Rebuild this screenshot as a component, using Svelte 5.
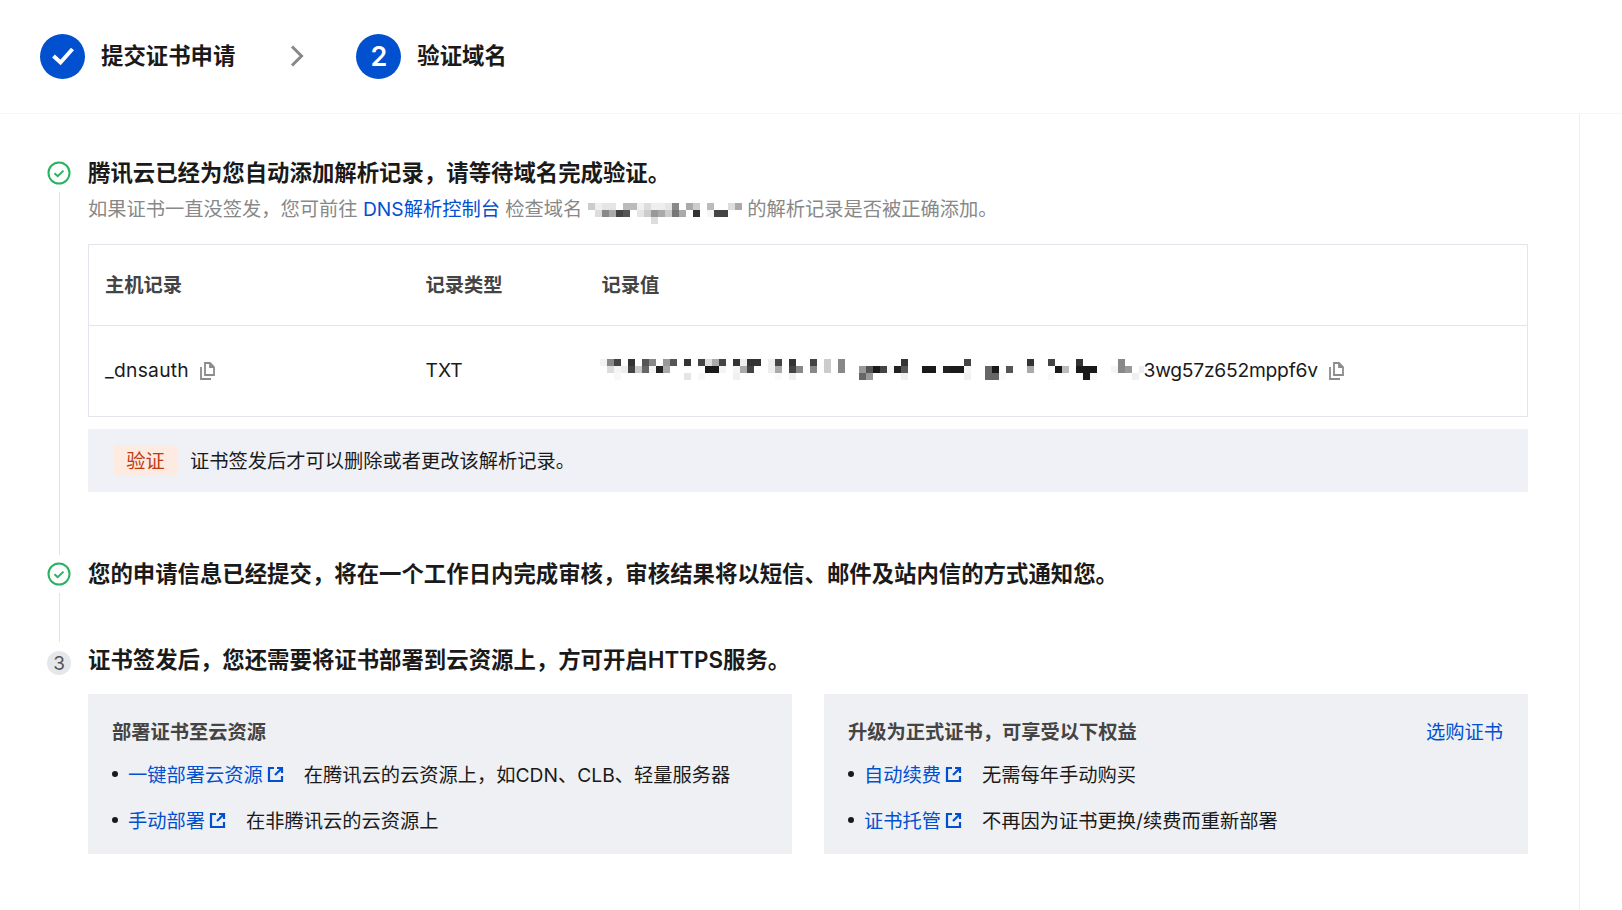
<script>
    // 打码区域: 每行 "列:灰度"
    const valueRows = [
        '0:f2 1:888 2:444 4:333 6:555 7:888 9:999 10:555 12:333 14:444 15:ddd 16:aaa 17:444 19:333 20:eee 21:333 22:333 24:eee 25:444 27:333 30:444 32:ccc 34:888 43:333 52:444 61:333 64:444 68:333 74:888',
        '1:ddd 2:f5 3:eee 4:444 5:ccc 6:666 7:f5 8:222 9:aaa 15:1a 16:1a 17:f5 19:f5 20:aaa 21:444 24:eee 25:aaa 27:444 28:888 30:888 32:ccc 34:888 37:999 38:555 39:1a 40:444 41:f8 42:222 43:555 46:1a 47:1a 49:222 50:1a 51:1a 52:f5 55:666 56:1a 58:555 61:aaa 65:1a 66:bbb 68:1a 69:1a 70:1a 73:f5 74:888 75:999 77:eee',
        '2:f8 12:e5 14:f8 19:f0 25:fa 27:f0 37:666 38:999 43:f0 52:f0 55:666 56:666 57:fa 64:f8 69:1a 70:f8 76:f0'
    ];
    const domainRows = [
        '0:ccc 1:eee 2:e5 3:e5 5:bbb 6:bbb 7:f0 8:ddd 9:eee 10:eee 11:e5 12:888 14:aaa 15:ccc 17:bbb 20:ddd 21:aaa',
        '1:ddd 2:888 3:aaa 4:444 5:555 7:e5 8:ccc 9:999 10:aaa 11:ccc 12:777 13:aaa 15:333 17:f5 18:444 19:444',
        '9:ddd'
    ];

    function cells(rows) {
        return rows.flatMap((row, r) => row.split(' ').map(item => {
            const [c, g] = item.split(':');
            const fill = g.length === 2 ? `#${g}${g}${g}` : `#${g}`;
            return { x: c * 7, y: r * 7, fill };
        }));
    }

    const valueCells = cells(valueRows);
    const domainCells = cells(domainRows);
</script>

{#snippet copyIcon()}
    <svg class="copy" width="16" height="19" viewBox="0 0 16 19" fill="none" stroke="#8c8c8c" stroke-width="1.8">
        <path d="M6 2h5l4 4v8H6z" />
        <path d="M11 2v4h4" fill="#8c8c8c" />
        <path d="M2 6v12h10" />
    </svg>
{/snippet}

{#snippet extIcon()}
    <svg class="ext" width="17" height="17" viewBox="0 0 17 17" fill="none" stroke="#0050d0" stroke-width="2.2">
        <path d="M7 2H2v13h13v-5" />
        <path d="M10 2h5v5M15 2L8 9" />
    </svg>
{/snippet}

{#snippet okIcon()}
    <svg class="step-icon" width="24" height="24" viewBox="0 0 24 24" fill="none" stroke="#27b35f" stroke-width="2">
        <circle cx="12" cy="12" r="10.5" />
        <path d="M7.5 12.2l3.2 3 5.8-5.6" />
    </svg>
{/snippet}

<div class="page">
    <header class="steps">
        <div class="circle">
            <svg width="24" height="20" viewBox="0 0 24 20" fill="none" stroke="#fff" stroke-width="4">
                <path d="M2.5 9l7 6.5L21.5 2" />
            </svg>
        </div>
        <span class="step-name first">提交证书申请</span>
        <svg class="chevron" width="14" height="23" viewBox="0 0 14 23" fill="none" stroke="#888" stroke-width="3">
            <path d="M2 1.5l9.5 9.5L2 20.5" />
        </svg>
        <div class="circle">2</div>
        <span class="step-name">验证域名</span>
    </header>

    <main class="main">
        <section class="step step-a">
            <div class="rail">
                {@render okIcon()}
                <div class="line"></div>
            </div>
            <div class="body">
                <h2>腾讯云已经为您自动添加解析记录，请等待域名完成验证。</h2>
                <p class="sub">如果证书一直没签发，您可前往 <a href="#dns">DNS解析控制台</a> 检查域名 <svg class="mosaic domain" width="154" height="21">
                        {#each domainCells as c}<rect x={c.x} y={c.y} width="7" height="7" fill={c.fill} />{/each}
                    </svg> 的解析记录是否被正确添加。</p>
                <table>
                    <colgroup><col class="c1" /><col class="c2" /><col /></colgroup>
                    <thead>
                        <tr><th>主机记录</th><th>记录类型</th><th>记录值</th></tr>
                    </thead>
                    <tbody>
                        <tr>
                            <td class="up"><span class="cell"><span class="host">_dnsauth</span>{@render copyIcon()}</span></td>
                            <td class="up">TXT</td>
                            <td>
                                <span class="cell value">
                                    <svg class="mosaic" width="544" height="21">
                                        {#each valueCells as c}<rect x={c.x} y={c.y} width="7" height="7" fill={c.fill} />{/each}
                                    </svg>
                                    <span class="token">3wg57z652mppf6v</span>
                                    {@render copyIcon()}
                                </span>
                            </td>
                        </tr>
                    </tbody>
                </table>
                <div class="notice">
                    <span class="tag"><span>验证</span></span>
                    <span class="notice-text">证书签发后才可以删除或者更改该解析记录。</span>
                </div>
            </div>
        </section>

        <section class="step step-b">
            <div class="rail">
                {@render okIcon()}
                <div class="line"></div>
            </div>
            <div class="body">
                <h2>您的申请信息已经提交，将在一个工作日内完成审核，审核结果将以短信、邮件及站内信的方式通知您。</h2>
            </div>
        </section>

        <section class="step step-c">
            <div class="rail">
                <div class="num">3</div>
            </div>
            <div class="body">
                <h2>证书签发后，您还需要将证书部署到云资源上，方可开启HTTPS服务。</h2>
                <div class="panels">
                    <div class="panel">
                        <div class="panel-head"><strong>部署证书至云资源</strong></div>
                        <ul>
                            <li><a href="#one">一键部署云资源</a>{@render extIcon()}<span>在腾讯云的云资源上，如CDN、CLB、轻量服务器</span></li>
                            <li><a href="#manual">手动部署</a>{@render extIcon()}<span>在非腾讯云的云资源上</span></li>
                        </ul>
                    </div>
                    <div class="panel">
                        <div class="panel-head"><strong>升级为正式证书，可享受以下权益</strong><a href="#buy">选购证书</a></div>
                        <ul>
                            <li><a href="#renew">自动续费</a>{@render extIcon()}<span>无需每年手动购买</span></li>
                            <li><a href="#host">证书托管</a>{@render extIcon()}<span>不再因为证书更换/续费而重新部署</span></li>
                        </ul>
                    </div>
                </div>
            </div>
        </section>
    </main>
</div>

<style>
    :global(body) {
        background: #fff;
    }
    .page {
        width: 1622px;
        height: 910px;
        overflow: hidden;
        font-family: Inter, "Noto Sans CJK SC", sans-serif;
        font-size: 19.25px;
        color: #1a1a1a;
    }
    a {
        color: #0050d0;
        text-decoration: none;
    }
    .steps {
        display: flex;
        align-items: center;
        height: 114px;
        padding-left: 40px;
        box-sizing: border-box;
        border-bottom: 1px solid #f6f6f6;
    }
    .circle {
        display: flex;
        align-items: center;
        justify-content: center;
        width: 45px;
        height: 45px;
        border-radius: 50%;
        background: #0050d0;
        color: #fff;
        font-size: 27px;
        font-weight: 600;
    }
    .step-name {
        margin: 0 0 5px 16px;
        font-size: 22.4px;
        font-weight: 600;
    }
    .chevron {
        margin: 0 52px 0 55px;
    }
    .main {
        width: 1580px;
        height: 796px;
        box-sizing: border-box;
        padding: 47px 51px 0 47px;
        border-right: 1px solid #eeeeee;
    }
    .step {
        display: flex;
    }
    .step-a {
        padding-bottom: 70px;
    }
    .step-b {
        padding-bottom: 62px;
    }
    .rail {
        display: flex;
        flex-direction: column;
        align-items: center;
        flex: 0 0 24px;
        margin-right: 17px;
    }
    .step-icon {
        flex: none;
    }
    .line {
        flex: 1;
        width: 1px;
        margin: 7px 0 -63px;
        background: #e3e3e3;
    }
    .step-b .line {
        margin-bottom: -56px;
    }
    .num {
        display: flex;
        align-items: center;
        justify-content: center;
        width: 24px;
        height: 24px;
        margin-top: 3px;
        border-radius: 50%;
        background: #e6e7ea;
        color: #555;
        font-size: 19px;
    }
    .body {
        flex: 1;
        min-width: 0;
    }
    h2 {
        margin: 0;
        font-size: 22.4px;
        line-height: 24px;
        font-weight: 600;
    }
    .sub {
        margin: 12px 0 0;
        height: 24px;
        line-height: 24px;
        color: #888;
        white-space: nowrap;
    }
    .mosaic {
        flex: none;
        filter: blur(0.5px);
    }
    .domain {
        vertical-align: -8px;
    }
    table {
        width: 100%;
        margin-top: 23px;
        border-collapse: collapse;
        border: 1px solid #e3e5ec;
        table-layout: fixed;
    }
    .c1 {
        width: 337px;
    }
    .c2 {
        width: 176px;
    }
    th,
    td {
        padding: 0 0 0 16px;
        text-align: left;
    }
    th {
        height: 78px;
        padding-bottom: 2px;
        color: #444;
        font-weight: 600;
        border-bottom: 1px solid #e3e5ec;
    }
    td {
        height: 90px;
    }
    td.up {
        height: 88px;
        padding-bottom: 2px;
    }
    td + td,
    th + th,
    td.up + td.up {
        padding-left: 0;
    }
    .cell {
        display: inline-flex;
        align-items: center;
        gap: 10px;
    }
    .host {
        letter-spacing: 0.25px;
    }
    .value {
        gap: 0;
        margin-left: -2px;
    }
    .token {
        position: relative;
        top: 1px;
        letter-spacing: -0.25px;
    }
    .value .copy {
        position: relative;
        top: 1px;
        margin-left: 10px;
    }
    .notice {
        display: flex;
        align-items: center;
        height: 63px;
        margin-top: 12px;
        padding-left: 26px;
        background: #f0f1f6;
    }
    .tag {
        display: flex;
        align-items: center;
        justify-content: center;
        width: 63px;
        height: 31px;
        margin-right: 13px;
        box-sizing: border-box;
        padding-bottom: 2px;
        border-radius: 2px;
        background: #fdeae0;
        color: #bf3a12;
    }
    .notice-text {
        margin-bottom: 2px;
    }
    .panels {
        display: grid;
        grid-template-columns: 1fr 1fr;
        gap: 32px;
        margin-top: 22px;
    }
    .panel {
        height: 160px;
        box-sizing: border-box;
        padding: 24px 25px 0 24px;
        background: #eff0f4;
    }
    .panel-head {
        display: flex;
        justify-content: space-between;
        line-height: 28px;
    }
    .panel-head strong {
        color: #444;
        font-weight: 600;
    }
    ul {
        display: flex;
        flex-direction: column;
        gap: 18px;
        margin: 14px 0 0;
        padding: 0;
        list-style: none;
    }
    li {
        position: relative;
        display: flex;
        align-items: center;
        height: 28px;
        padding-left: 16px;
    }
    li::before {
        content: '';
        position: absolute;
        left: 0;
        top: 11px;
        width: 6px;
        height: 6px;
        border-radius: 50%;
        background: #1a1a1a;
    }
    .ext {
        flex: none;
        margin-left: 4px;
    }
    li span {
        margin-left: 20px;
    }
</style>
